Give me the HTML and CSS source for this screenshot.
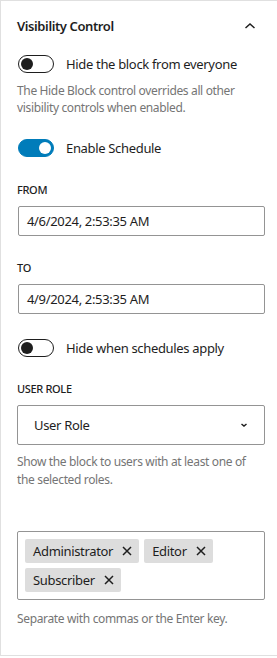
FILE: index.html
```html
<!DOCTYPE html>
<html>
    <head>
        <meta charset="utf-8">
        <title>Visibility Control</title>
        <link rel="stylesheet" href="styles.css">
    </head>
    <body>
        <div class="panel">
            <div class="panel-header">
                <h2 class="panel-title">Visibility Control</h2>
                <svg class="chevron-up" width="24" height="24" viewBox="0 0 24 24">
                    <path d="M7.5 14L12 10l4.5 4" fill="none" stroke="#1e1e1e" stroke-width="1.5"/>
                </svg>
            </div>

            <div class="toggle-row first">
                <span class="toggle"><span class="knob"></span></span>
                <span class="toggle-label">Hide the block from everyone</span>
            </div>
            <p class="help help-first">The Hide Block control overrides all other visibility controls when enabled.</p>

            <div class="toggle-row schedule">
                <span class="toggle on"><span class="knob"></span></span>
                <span class="toggle-label">Enable Schedule</span>
            </div>

            <div class="field-label">From</div>
            <div class="text-input">4/6/2024, 2:53:35 AM</div>

            <div class="field-label">To</div>
            <div class="text-input">4/9/2024, 2:53:35 AM</div>

            <div class="toggle-row">
                <span class="toggle"><span class="knob"></span></span>
                <span class="toggle-label">Hide when schedules apply</span>
            </div>

            <div class="field-label role-label">User Role</div>
            <div class="select">
                <span>User Role</span>
                <svg width="12" height="12" viewBox="0 0 12 12">
                    <path d="M3.5 5l2.5 2 2.5-2" fill="none" stroke="#1e1e1e" stroke-width="1.5"/>
                </svg>
            </div>
            <p class="help">Show the block to users with at least one of the selected roles.</p>

            <div class="token-field">
                <span class="token">Administrator
                    <svg class="token-x" width="10" height="10" viewBox="0 0 10 10"><path d="M1 1l8 8M9 1l-8 8" stroke="#1e1e1e" stroke-width="1.5"/></svg>
                </span>
                <span class="token">Editor
                    <svg class="token-x" width="10" height="10" viewBox="0 0 10 10"><path d="M1 1l8 8M9 1l-8 8" stroke="#1e1e1e" stroke-width="1.5"/></svg>
                </span>
                <span class="token">Subscriber
                    <svg class="token-x" width="10" height="10" viewBox="0 0 10 10"><path d="M1 1l8 8M9 1l-8 8" stroke="#1e1e1e" stroke-width="1.5"/></svg>
                </span>
            </div>
            <p class="help help-last">Separate with commas or the Enter key.</p>
        </div>
    </body>
</html>
```

FILE: styles.css
```css
body {
    margin: 0;
    font-family: "Noto Sans", "Open Sans", sans-serif;
    font-size: 13px;
    letter-spacing: -0.33px;
    color: #1e1e1e;
    background: #fff;
}
.panel {
    box-sizing: border-box;
    height: 656px;
    border-top: 1px solid #e0e0e0;
    border-left: 1px solid #e0e0e0;
    border-bottom: 1px solid #e0e0e0;
    padding: 15px 12px 0 16px;
}
.panel-header {
    display: flex;
    justify-content: space-between;
    align-items: center;
    height: 20px;
}
.panel-title {
    margin: 0;
    font-size: 13px;
    font-weight: 600;
    line-height: 20px;
    letter-spacing: -0.4px;
}
.chevron-up {
    margin-right: 3px;
}
.toggle-row {
    display: flex;
    align-items: center;
    height: 20px;
    margin-top: 24px;
}
.toggle-row.first {
    margin-top: 18px;
}
.toggle-row.schedule {
    margin-top: 22px;
}
.toggle {
    box-sizing: border-box;
    position: relative;
    width: 36px;
    height: 18px;
    margin-left: 1px;
    border: 1px solid #1e1e1e;
    border-radius: 9px;
}
.toggle .knob {
    position: absolute;
    top: 2px;
    left: 2px;
    width: 12px;
    height: 12px;
    border-radius: 50%;
    background: #1e1e1e;
}
.toggle.on {
    background: #007cba;
    border-color: #007cba;
}
.toggle.on .knob {
    left: 20px;
    background: #fff;
}
.toggle-label {
    margin-left: 12px;
    line-height: 20px;
}
.help {
    margin: 8px 0 0;
    font-size: 12px;
    line-height: 18px;
    letter-spacing: -0.35px;
    color: #757575;
}
.help-first {
    line-height: 17px;
}
.help-last {
    margin-top: 10px;
}
.field-label {
    margin-top: 24px;
    font-size: 11px;
    font-weight: 500;
    line-height: 16px;
    text-transform: uppercase;
}
.role-label {
    margin-top: 23px;
}
.text-input {
    box-sizing: border-box;
    height: 30px;
    margin: 8px 0 0 1px;
    padding: 0 8px;
    border: 1px solid #949494;
    border-radius: 2px;
    line-height: 28px;
}
.select {
    box-sizing: border-box;
    display: flex;
    justify-content: space-between;
    align-items: center;
    height: 40px;
    margin-top: 8px;
    padding: 0 14px 0 16px;
    border: 1px solid #949494;
    border-radius: 2px;
}
.token-field {
    box-sizing: border-box;
    display: flex;
    flex-wrap: wrap;
    gap: 5px;
    margin-top: 42px;
    padding: 7px 7px;
    border: 1px solid #949494;
    border-radius: 2px;
}
.token {
    display: inline-flex;
    align-items: center;
    height: 24px;
    padding: 0 7px 0 8px;
    border-radius: 2px;
    background: #ddd;
    line-height: 24px;
}
.token-x {
    margin-left: 9px;
}
```
